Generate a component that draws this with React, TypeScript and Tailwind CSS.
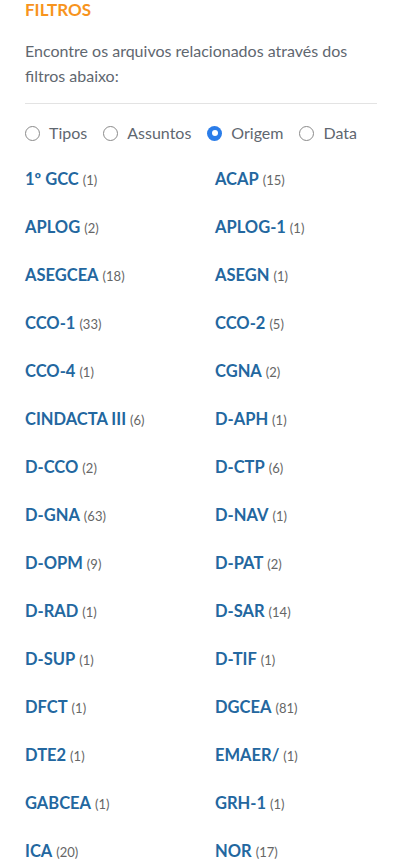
const origens: [string, number][] = [
  ["1º GCC", 1],
  ["ACAP", 15],
  ["APLOG", 2],
  ["APLOG-1", 1],
  ["ASEGCEA", 18],
  ["ASEGN", 1],
  ["CCO-1", 33],
  ["CCO-2", 5],
  ["CCO-4", 1],
  ["CGNA", 2],
  ["CINDACTA III", 6],
  ["D-APH", 1],
  ["D-CCO", 2],
  ["D-CTP", 6],
  ["D-GNA", 63],
  ["D-NAV", 1],
  ["D-OPM", 9],
  ["D-PAT", 2],
  ["D-RAD", 1],
  ["D-SAR", 14],
  ["D-SUP", 1],
  ["D-TIF", 1],
  ["DFCT", 1],
  ["DGCEA", 81],
  ["DTE2", 1],
  ["EMAER/", 1],
  ["GABCEA", 1],
  ["GRH-1", 1],
  ["ICA", 20],
  ["NOR", 17],
]

function Radio({ label, checked }: { label: string; checked?: boolean }) {
  return (
    <label className="flex items-center gap-[9px]">
      {checked ? (
        <span className="flex h-[15px] w-[15px] items-center justify-center rounded-full bg-[#2b7de9]">
          <span className="h-[6px] w-[6px] rounded-full bg-white" />
        </span>
      ) : (
        <span className="h-[15px] w-[15px] rounded-full border border-[#8a8a8a] bg-white" />
      )}
      <span className="text-[16px] text-[#5f6770]">{label}</span>
    </label>
  )
}

export default function App() {
  return (
    <div className="min-h-screen bg-white px-[25px] font-['Lato',sans-serif]">
      <h2 className="pt-[1px] text-[17px] font-bold leading-[18px] text-[#f7941d]">FILTROS</h2>
      <p className="mt-[19px] text-[16px] leading-[25px] text-[#5f6770]">
        Encontre os arquivos relacionados através dos filtros abaixo:
      </p>
      <div className="mt-[15px] border-t border-[#e3e3e3]" />
      <div className="mt-[17px] flex items-center gap-[16px]">
        <Radio label="Tipos" />
        <Radio label="Assuntos" />
        <Radio label="Origem" checked />
        <Radio label="Data" />
      </div>
      <div className="mt-[24px] grid grid-cols-[190px_1fr] gap-y-[28px]">
        {origens.map(([nome, n]) => (
          <a key={nome} href="#" className="flex h-[20px] items-baseline gap-[4px] leading-[20px]">
            <span className="text-[16.5px] font-bold text-[#23679f]">{nome}</span>
            <span className="text-[13px] text-[#666]">({n})</span>
          </a>
        ))}
      </div>
    </div>
  )
}
